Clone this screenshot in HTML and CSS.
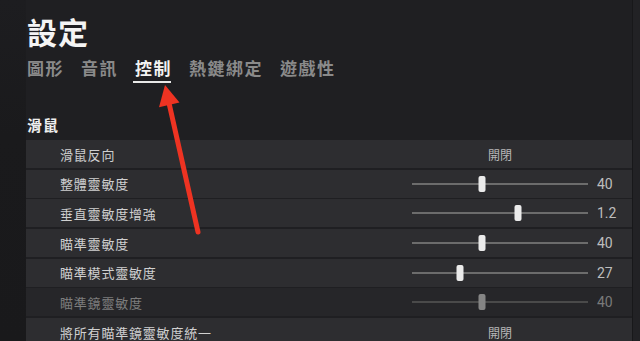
FILE: index.html
```html
<!DOCTYPE html>
<html lang="zh-Hant">
<head>
<meta charset="utf-8">
<title>設定</title>
<link rel="stylesheet" href="styles.css">
</head>
<body>
<div class="screen">
  <div class="rail"></div>
  <main class="main">
    <header class="header">
      <h1 class="title">設定</h1>
      <nav class="tabs">
        <span class="tab">圖形</span>
        <span class="tab">音訊</span>
        <span class="tab active">控制</span>
        <span class="tab">熱鍵綁定</span>
        <span class="tab">遊戲性</span>
      </nav>
    </header>
    <section class="section">
      <h2 class="section-title">滑鼠</h2>
      <div class="rows">
        <div class="row">
          <span class="label">滑鼠反向</span>
          <span class="toggle">開閉</span>
          <span class="value"></span>
        </div>
        <div class="row">
          <span class="label">整體靈敏度</span>
          <span class="slider"><span class="thumb" style="left:40%"></span></span>
          <span class="value">40</span>
        </div>
        <div class="row">
          <span class="label">垂直靈敏度增強</span>
          <span class="slider"><span class="thumb" style="left:60%"></span></span>
          <span class="value">1.2</span>
        </div>
        <div class="row">
          <span class="label">瞄準靈敏度</span>
          <span class="slider"><span class="thumb" style="left:40%"></span></span>
          <span class="value">40</span>
        </div>
        <div class="row">
          <span class="label">瞄準模式靈敏度</span>
          <span class="slider"><span class="thumb" style="left:27%"></span></span>
          <span class="value">27</span>
        </div>
        <div class="row disabled">
          <span class="label">瞄準鏡靈敏度</span>
          <span class="slider"><span class="thumb" style="left:40%"></span></span>
          <span class="value">40</span>
        </div>
        <div class="row">
          <span class="label">將所有瞄準鏡靈敏度統一</span>
          <span class="toggle">開閉</span>
          <span class="value"></span>
        </div>
      </div>
    </section>
  </main>
  <div class="edge"></div>
  <svg class="arrow" width="640" height="341" viewBox="0 0 640 341">
    <line x1="198" y1="232" x2="169" y2="103" stroke="#ee3322" stroke-width="5" stroke-linecap="round"/>
    <polygon points="165,85 179.5,102.6 159,107.2" fill="#ee3322"/>
  </svg>
</div>
</body>
</html>
```
FILE: styles.css
```css
* { box-sizing: border-box; }
html, body {
  margin: 0;
  padding: 0;
  background: #1f1f22;
}
body {
  font-family: "Noto Sans CJK TC", "Noto Sans", sans-serif;
  color: #fff;
}
.screen {
  position: relative;
  width: 640px;
  height: 341px;
  overflow: hidden;
  display: flex;
  background: #1f1f22;
}
.rail {
  width: 26px;
  flex: none;
  background: linear-gradient(#1d1d20, #1a1a1c 40%, #19191b);
}
.main {
  flex: 1;
  min-width: 0;
}
.edge {
  width: 8px;
  flex: none;
  background: #222225;
  border-left: 1px solid #18181a;
}
.header {
  padding: 16px 0 0 1px;
}
.title {
  margin: 0;
  font-size: 30px;
  line-height: 30px;
  font-weight: 700;
  letter-spacing: 1px;
  color: #f4f4f4;
}
.tabs {
  display: flex;
  gap: 17px;
  margin-top: 12px;
}
.tab {
  position: relative;
  font-size: 17px;
  line-height: 20px;
  font-weight: 700;
  letter-spacing: 1.5px;
  color: #8a8a8a;
}
.tab.active {
  color: #f2f2f2;
}
.tab.active::after {
  content: "";
  position: absolute;
  left: -2px;
  right: 1px;
  top: 23px;
  height: 2px;
  background: #e8e8e8;
}
.section {
  margin-top: 38px;
}
.section-title {
  margin: 0 0 7px 1px;
  font-size: 15px;
  line-height: 17px;
  font-weight: 700;
  letter-spacing: 1px;
  color: #eeeeee;
}
.rows {
  display: flex;
  flex-direction: column;
  gap: 1.7px;
}
.row {
  display: grid;
  grid-template-columns: 1fr 176px 35px;
  column-gap: 9px;
  align-items: center;
  height: 28px;
  padding-left: 34px;
  background: #2d2d30;
}
.label {
  font-size: 13px;
  letter-spacing: 0.8px;
  color: #d0d0d0;
  white-space: nowrap;
}
.toggle {
  text-align: center;
  font-size: 12px;
  color: #b8b8b8;
}
.slider {
  position: relative;
  height: 2px;
  background: #6c6c6c;
}
.thumb {
  position: absolute;
  top: -7px;
  width: 7px;
  height: 16px;
  transform: translateX(-50%);
  border-radius: 2px;
  background: #ebebeb;
}
.value {
  font-family: Roboto, "Liberation Sans", sans-serif;
  font-size: 14px;
  color: #bdbdbd;
}
.row.disabled {
  background: #262629;
}
.row.disabled .label { color: #7d7d7d; }
.row.disabled .slider { background: #4a4a4a; }
.row.disabled .thumb { background: #858585; }
.row.disabled .value { color: #7a7a7a; }
.arrow {
  position: absolute;
  left: 0;
  top: 0;
  pointer-events: none;
}
```
